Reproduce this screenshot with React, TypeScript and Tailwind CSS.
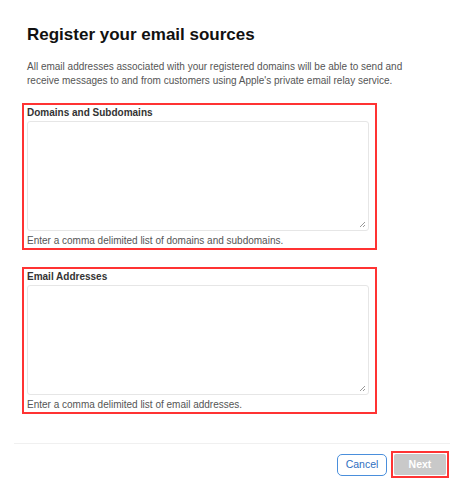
export default function App() {
  return (
    <div className="w-[476px] h-[496px] bg-white font-['Liberation_Sans',Arial,sans-serif] text-[#1d1d1f] overflow-hidden">
      <div className="pt-[24px] pl-[27px]">
        <h1 className="text-[17px] font-bold leading-[21px] text-[#111]">Register your email sources</h1>
        <p className="mt-[15px] text-[10px] leading-[14px] text-[#555] whitespace-nowrap">
          All email addresses associated with your registered domains will be able to send and
          <br />
          receive messages to and from customers using Apple's private email relay service.
        </p>
      </div>

      <div className="ml-[22px] mt-[15px] w-[355px] flex flex-col gap-[17px]">
        <Field label="Domains and Subdomains" hint="Enter a comma delimited list of domains and subdomains." />
        <Field label="Email Addresses" hint="Enter a comma delimited list of email addresses." />
      </div>

      <div className="mt-[29px] ml-[14px] w-[436px] h-px bg-[#f0f0f0]" />

      <div className="mt-[7px] w-[449px] flex justify-end items-center gap-[4px]">
        <button className="h-[22px] w-[50px] rounded-[5px] border border-[#4a8fdc] text-[#2f6fbf] text-[10.5px] bg-white">
          Cancel
        </button>
        <div className="border-2 border-[#ff3333] p-[1px]">
          <button className="block h-[21px] w-[52px] bg-[#c9c9c9] text-white text-[10.5px] font-bold rounded-[2px]">
            Next
          </button>
        </div>
      </div>
    </div>
  );
}

function Field({ label, hint }: { label: string; hint: string }) {
  return (
    <div className="border-2 border-[#ff3333] pl-[3px] pr-[6px] pt-[1px] pb-[1px]">
      <div className="text-[10px] leading-[14px] font-bold text-[#333]">{label}</div>
      <div className="relative mt-[1px] h-[110px] rounded-[3px] border border-[#e6e6e6]">
        <svg className="absolute right-[2px] bottom-[2px]" width="7" height="7" viewBox="0 0 7 7">
          <path d="M6 1 L1 6 M6 4 L4 6" stroke="#999" strokeWidth="1" />
        </svg>
      </div>
      <div className="mt-[3px] text-[10px] leading-[13px] text-[#555]">{hint}</div>
    </div>
  );
}
